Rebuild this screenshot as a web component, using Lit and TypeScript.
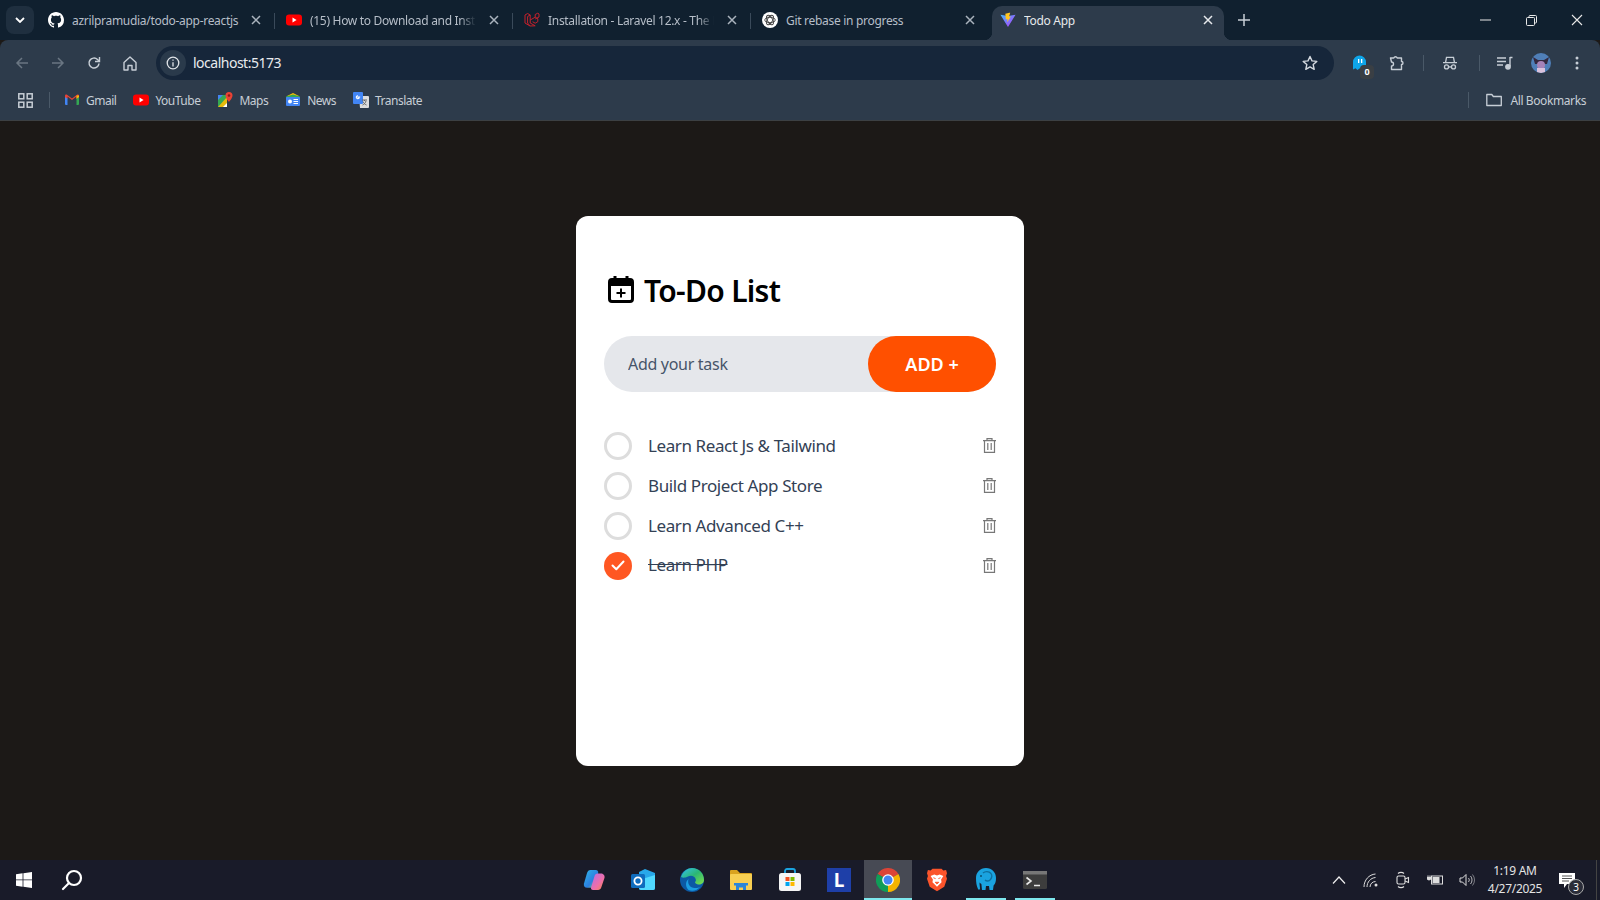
import { LitElement, html, css } from "lit";
import { customElement, state } from "lit/decorators.js";

const UI_FONT = css`"Noto Sans", "Open Sans", sans-serif`;

const githubIcon = html`<svg width="16" height="16" viewBox="0 0 16 16" fill="#fff"><path d="M8 0C3.58 0 0 3.58 0 8c0 3.54 2.29 6.53 5.47 7.59.4.07.55-.17.55-.38 0-.19-.01-.82-.01-1.49-2.01.37-2.53-.49-2.69-.94-.09-.23-.48-.94-.82-1.13-.28-.15-.68-.52-.01-.53.63-.01 1.08.58 1.23.82.72 1.21 1.87.87 2.33.66.07-.52.28-.87.51-1.07-1.78-.2-3.64-.89-3.64-3.95 0-.87.31-1.59.82-2.15-.08-.2-.36-1.02.08-2.12 0 0 .67-.21 2.2.82.64-.18 1.32-.27 2-.27.68 0 1.36.09 2 .27 1.53-1.04 2.2-.82 2.2-.82.44 1.1.16 1.92.08 2.12.51.56.82 1.27.82 2.15 0 3.07-1.87 3.75-3.65 3.95.29.25.54.73.54 1.48 0 1.07-.01 1.93-.01 2.2 0 .21.15.46.55.38A8.013 8.013 0 0016 8c0-4.42-3.58-8-8-8z"/></svg>`;
const youtubeIcon = html`<svg width="16" height="16" viewBox="0 0 16 16"><rect y="2.5" width="16" height="11" rx="3" fill="#f00"/><path d="M6.5 5.6 10.6 8l-4.1 2.4z" fill="#fff"/></svg>`;
const laravelIcon = html`<svg width="16" height="16" viewBox="0 0 16 16" fill="none" stroke="#c5202c" stroke-width="1" stroke-linejoin="round"><path d="M1 3 3.6 1.5 6.2 3v8l5 2.800M1 3v8l5 3 5.200-.2M3.600 4.500 6.200 3M3.600 4.500V11L6 14M6.200 8l5-2.800 2.600 1.500v3l-2.600 1.500-2.600-1.500M11.200 5.200V2.500l2.600-1.300 1.200.8v3l-3.800 2"/></svg>`;
const openaiIcon = html`<svg width="16" height="16" viewBox="0 0 16 16"><circle cx="8" cy="8" r="8" fill="#fff"/><g fill="none" stroke="#444" stroke-width=".9"><ellipse cx="8" cy="8" rx="5.200" ry="2.600"/><ellipse cx="8" cy="8" rx="5.200" ry="2.600" transform="rotate(60 8 8)"/><ellipse cx="8" cy="8" rx="5.200" ry="2.600" transform="rotate(120 8 8)"/></g></svg>`;
const viteIcon = html`<svg width="16" height="16" viewBox="0 0 18 18"><defs><linearGradient id="vt" x1="0" y1="0" x2="1" y2="1"><stop offset="0" stop-color="#41b9ff"/><stop offset="1" stop-color="#bd34fe"/></linearGradient></defs><path d="M.5 3 9 17 17.500 3 9 4.500z" fill="url(#vt)"/><path d="M10.500.8 6 2l.6 6.500 1.900-.5-.3 3.500 4-6.500-2 .4 1.300-4.600z" fill="#ffc61f"/></svg>`;

const gmailIcon = html`<svg width="16" height="16" viewBox="0 0 16 16"><path d="M1 13V4.500L3.500 6v7H2a1 1 0 0 1-1-1z" fill="#4285f4"/><path d="M15 13V4.500L12.500 6v7H14a1 1 0 0 0 1-1z" fill="#34a853"/><path d="M1 5V3.800C1 2.700 2.200 2.100 3 2.700L8 6.500 13 2.700c.8-.6 2-0 2 1.100V5L12.500 6.800V4.500L8 8 3.500 4.500v2.300z" fill="#ea4335"/><path d="M12.500 3.500 15 3.400V5l-2.500 1.800z" fill="#fbbc04"/></svg>`;
const mapsIcon = html`<svg width="16" height="16" viewBox="0 0 16 16"><path d="M1 3h9v12H1z" fill="#34a853"/><path d="M1 15 10 5v10z" fill="#fbbc04" opacity=".9"/><path d="M1 3h5L1 8z" fill="#4285f4"/><path d="M6 15 10 11v4z" fill="#fff"/><path d="M12 0a3.500 3.500 0 0 0-3.500 3.500C8.500 6 12 10 12 10s3.500-4 3.500-6.500A3.500 3.500 0 0 0 12 0z" fill="#ea4335"/><circle cx="12" cy="3.500" r="1.300" fill="#8c1c13"/></svg>`;
const newsIcon = html`<svg width="16" height="16" viewBox="0 0 16 16"><path d="M2 4 8 1l6 3v2H2z" fill="#fbbc04"/><path d="M1 4.500 8 2.500l7 2V6H1z" fill="#34a853"/><rect x="1" y="5" width="14" height="9" rx="1" fill="#4285f4"/><rect x="3" y="7.500" width="4" height="4" rx="2" fill="#fff"/><path d="M8.500 7.500h4.500M8.500 9.500h4.500M8.500 11.500h4.500" stroke="#fff"/></svg>`;
const translateIcon = html`<svg width="16" height="16" viewBox="0 0 16 16"><path d="M6 4h9a1 1 0 0 1 1 1v10a1 1 0 0 1-1 1H7z" fill="#ddd"/><rect width="10" height="12" rx="1" fill="#4285f4"/><path d="M7.200 5H5v1.200h1A1.500 1.500 0 1 1 5 3.800" fill="none" stroke="#fff" stroke-width="1.100"/><path d="M9 8h5M11.500 8v1M13 9c-.5 2-2 3.500-3.500 4M10 9.500c.6 1.600 2 3 3.500 3.500" fill="none" stroke="#666"/></svg>`;

@customElement("browser-chrome")
class BrowserChrome extends LitElement {
    static styles = css`
        :host {
            display: block;
            font-family: ${UI_FONT};
            color: #c7ced6;
            font-size: 12px;
        }

        svg { display: block; }

        .strip {
            display: flex;
            height: 40px;
            background: #10202f;
            padding-left: 6px;
        }

        .menu {
            width: 28px;
            height: 28px;
            margin: 6px 3px 0 0;
            border-radius: 8px;
            background: #1f2f3f;
            display: flex;
            align-items: center;
            justify-content: center;
        }

        .tab {
            position: relative;
            width: 238px;
            flex: none;
            margin-top: 6px;
            display: flex;
            align-items: center;
            padding: 0 0 6px 11px;
            box-sizing: border-box;
        }

        .tab .fav { width: 16px; flex: none; margin-right: 8px; }
        .tab .title {
            width: 171px;
            flex: none;
            white-space: nowrap;
            overflow: hidden;
            letter-spacing: -0.3px;
            color: #b6bec8;
            -webkit-mask-image: linear-gradient(to right, #000 150px, transparent 166px);
        }
        .tab .title.full { -webkit-mask-image: none; }
        .tab .close { margin-left: 8px; }

        .tab .divider {
            position: absolute;
            right: 0;
            top: 7px;
            width: 1px;
            height: 16px;
            background: #3a4a5a;
        }

        .tab.active {
            width: 232px;
            margin-left: 3px;
            background: #2d3b4b;
            border-radius: 10px 10px 0 0;
            padding: 0 0 6px 8px;
        }
        .tab.active .title { color: #e6e9ec; }
        .tab.active::before,
        .tab.active::after {
            content: "";
            position: absolute;
            bottom: 0;
            width: 8px;
            height: 8px;
        }
        .tab.active::before { left: -8px; background: radial-gradient(circle at 0 0, transparent 8px, #2d3b4b 8.500px); }
        .tab.active::after { right: -8px; background: radial-gradient(circle at 100% 0, transparent 8px, #2d3b4b 8.500px); }

        .newtab { margin: 6px 0 0 12px; width: 16px; height: 28px; display: flex; align-items: center; justify-content: center; }

        .winctl { margin-left: auto; display: flex; }
        .winctl div { width: 46px; height: 40px; display: flex; align-items: center; justify-content: center; }

        .toolbar {
            height: 34px;
            padding: 6px 0 0 4px;
            background: #2d3b4b;
            border-radius: 8px 8px 0 0;
            display: flex;
            align-items: center;
        }

        .slot { width: 36px; height: 34px; flex: none; display: flex; align-items: center; justify-content: center; }

        .omnibox {
            flex: 1;
            height: 34px;
            margin-left: 8px;
            background: #16263a;
            border-radius: 17px;
            display: flex;
            align-items: center;
            padding: 0 6px 0 4px;
        }
        .omnibox .info {
            width: 26px;
            height: 26px;
            border-radius: 50%;
            background: #2a3a4b;
            display: flex;
            align-items: center;
            justify-content: center;
            margin-right: 7px;
        }
        .omnibox .url { font-size: 14px; line-height: 33px; padding-bottom: 1px; color: #e8ebee; flex: 1; letter-spacing: -0.5px; }
        .omnibox .star { margin-right: 10px; }

        .right { width: 266px; flex: none; display: flex; align-items: center; padding-left: 8px; box-sizing: border-box; }
        .vsep { width: 1px; height: 16px; background: #4a5968; flex: none; margin: 0 8px; }

        .ghost { position: relative; }
        .badge {
            position: absolute;
            left: 18px;
            top: 19px;
            width: 14px;
            height: 14px;
            border-radius: 4px;
            background: #3a3f44;
            color: #fff;
            font-size: 9px;
            font-weight: 700;
            text-align: center;
            line-height: 14px;
        }

        .puzzle { margin-left: 1px; }
        .vsep.wide { margin: 0 7px 0 11px; }
        .music { margin-left: 0; }

        .avatar { width: 20px; height: 20px; border-radius: 50%; overflow: hidden; }

        .bookmarks {
            height: 40px;
            background: #2d3b4b;
            border-bottom: 1px solid #3c4043;
            display: flex;
            align-items: center;
            padding-left: 18px;
            gap: 17px;
        }
        .bookmarks .grid { width: 16px; }
        .bookmarks .vsep { margin: 0 -3px 0 -2px; }
        .bm { display: flex; align-items: center; gap: 6px; color: #c7ced6; letter-spacing: -0.5px; white-space: nowrap; }
        .all { margin-left: auto; display: flex; align-items: center; padding-right: 14px; letter-spacing: -0.4px; }
        .all .vsep { margin: 0 17px 0 0; }
        .all svg { margin-right: 8px; }
    `;

    _tab(icon: unknown, title: string, divider = true, full = false) {
        return html`
            <div class="tab">
                <div class="fav">${icon}</div>
                <div class="title ${full ? "full" : ""}">${title}</div>
                <div class="close">${this._x("#aab3bd")}</div>
                ${divider ? html`<div class="divider"></div>` : ""}
            </div>`;
    }

    _x(color: string) {
        return html`<svg width="10" height="10" viewBox="0 0 10 10" stroke="${color}" stroke-width="1.500"><path d="M1 1l8 8M9 1l-8 8"/></svg>`;
    }

    render() {
        return html`
            <div class="strip">
                <div class="menu">
                    <svg width="10" height="6" viewBox="0 0 10 6" fill="none" stroke="#fff" stroke-width="1.800"><path d="M1 1l4 4 4-4"/></svg>
                </div>
                ${this._tab(githubIcon, "azrilpramudia/todo-app-reactjs", true, true)}
                ${this._tab(youtubeIcon, "(15) How to Download and Inst")}
                ${this._tab(laravelIcon, "Installation - Laravel 12.x - The P")}
                ${this._tab(openaiIcon, "Git rebase in progress", false, true)}
                <div class="tab active">
                    <div class="fav">${viteIcon}</div>
                    <div class="title full">Todo App</div>
                    <div class="close">${this._x("#e6e9ec")}</div>
                </div>
                <div class="newtab">
                    <svg width="12" height="12" viewBox="0 0 12 12" stroke="#c7ced6" stroke-width="1.500"><path d="M6 0v12M0 6h12"/></svg>
                </div>
                <div class="winctl">
                    <div><svg width="11" height="2" viewBox="0 0 11 2" stroke="#e8e8e8"><path d="M0 1h11"/></svg></div>
                    <div><svg width="11" height="11" viewBox="0 0 11 11" fill="none" stroke="#e8e8e8"><rect x=".5" y="2.500" width="8" height="8" rx="1"/><path d="M3 2.500V1.500a1 1 0 0 1 1-1h5.500a1 1 0 0 1 1 1V7a1 1 0 0 1-1 1h-1"/></svg></div>
                    <div><svg width="12" height="12" viewBox="0 0 12 12" stroke="#e8e8e8" stroke-width="1.100"><path d="M1 1l10 10M11 1L1 11"/></svg></div>
                </div>
            </div>

            <div class="toolbar">
                <div class="slot"><svg width="14" height="14" viewBox="0 0 14 14" fill="none" stroke="#6a7683" stroke-width="1.500"><path d="M13 7H2M7 2 2 7l5 5"/></svg></div>
                <div class="slot"><svg width="14" height="14" viewBox="0 0 14 14" fill="none" stroke="#6a7683" stroke-width="1.500"><path d="M1 7h11M7 2l5 5-5 5"/></svg></div>
                <div class="slot"><svg width="14" height="14" viewBox="0 0 14 14" fill="none" stroke="#c7ced6" stroke-width="1.500"><path d="M12 7.500A5 5 0 1 1 10.500 3.500L12 5"/><path d="M12.500 1v4.500H8" stroke-width="1.400"/></svg></div>
                <div class="slot"><svg width="14" height="15" viewBox="0 0 14 15" fill="none" stroke="#c7ced6" stroke-width="1.400"><path d="M1 6.500 7 1l6 5.500V14H9V9.500H5V14H1z" stroke-linejoin="round"/></svg></div>
                <div class="omnibox">
                    <div class="info"><svg width="14" height="14" viewBox="0 0 14 14" fill="none" stroke="#e0e4e8" stroke-width="1.300"><circle cx="7" cy="7" r="5.800"/><path d="M7 6.200V10.500M7 3.400v1.300"/></svg></div>
                    <div class="url">localhost:5173</div>
                    <svg class="star" width="16" height="16" viewBox="0 0 16 16" fill="none" stroke="#d5dae0" stroke-width="1.400" stroke-linejoin="round"><path d="M8 1.500l2 4.400 4.800.5-3.600 3.200 1 4.700L8 11.900l-4.200 2.400 1-4.700L1.200 6.400 6 5.900z"/></svg>
                </div>
                <div class="right">
                    <div class="slot ghost">
                        <svg width="14" height="16" viewBox="0 0 14 16"><path d="M0 7a6.500 6.500 0 0 1 13 0v7.500l-2.200-1.300L9 15l-2.200-1.800L4.500 15 2.500 13.200 0 14.500z" fill="#0ea5e9"/><rect x="5" y="4" width="1.300" height="4" fill="#fff"/><rect x="8" y="4" width="1.300" height="4" fill="#fff"/></svg>
                        <div class="badge">0</div>
                    </div>
                    <div class="slot puzzle">
                        <svg width="16" height="16" viewBox="0 0 16 16" fill="none" stroke="#c7ced6" stroke-width="1.400" stroke-linejoin="round"><path d="M1.500 3h3.300a1.800 1.800 0 0 1 3.400 0h4.300v3.500a1.500 1.500 0 0 1 0 3V14.500H2.500V11a2 2 0 0 0 0-4z"/></svg>
                    </div>
                    <div class="vsep"></div>
                    <div class="slot">
                        <svg width="16" height="14" viewBox="0 0 18 16" fill="none" stroke="#c7ced6" stroke-width="1.500"><path d="M1 7.500h16M4 7l1-5.500h8L14 7"/><circle cx="5" cy="12.500" r="2.300"/><circle cx="13" cy="12.500" r="2.300"/><path d="M7.300 12.500h3.400"/></svg>
                    </div>
                    <div class="vsep wide"></div>
                    <div class="slot music">
                        <svg width="16" height="14" viewBox="0 0 16 14" fill="none" stroke="#c7ced6" stroke-width="1.400"><path d="M0 2h9M0 5.500h9M0 9h6"/><path d="M13 1.500h2.500M13 1v9"/><circle cx="11" cy="10.800" r="2.200" fill="#c7ced6"/></svg>
                    </div>
                    <div class="slot">
                        <div class="avatar">
                            <svg width="20" height="20" viewBox="0 0 20 20"><rect width="20" height="20" fill="#4f7fb8"/><path d="M2 4l5 3h6l5-3-2 7H4z" fill="#34293f"/><circle cx="10" cy="12" r="4" fill="#a583b8"/><rect x="6" y="15" width="8" height="5" fill="#d9c2dc"/></svg>
                        </div>
                    </div>
                    <div class="slot">
                        <svg width="4" height="14" viewBox="0 0 4 14" fill="#c7ced6"><circle cx="2" cy="2" r="1.500"/><circle cx="2" cy="7" r="1.500"/><circle cx="2" cy="12" r="1.500"/></svg>
                    </div>
                </div>
            </div>

            <div class="bookmarks">
                <div class="grid">
                    <svg width="15" height="15" viewBox="0 0 15 15" fill="none" stroke="#c7ced6" stroke-width="1.500"><rect x=".8" y=".8" width="5" height="5"/><rect x="9.200" y=".8" width="5" height="5"/><rect x=".8" y="9.200" width="5" height="5"/><rect x="9.200" y="9.200" width="5" height="5"/></svg>
                </div>
                <div class="vsep"></div>
                <div class="bm">${gmailIcon}Gmail</div>
                <div class="bm">${youtubeIcon}YouTube</div>
                <div class="bm">${mapsIcon}Maps</div>
                <div class="bm">${newsIcon}News</div>
                <div class="bm">${translateIcon}Translate</div>
                <div class="all">
                    <div class="vsep"></div>
                    <svg width="16" height="14" viewBox="0 0 16 14" fill="none" stroke="#c7ced6" stroke-width="1.300"><path d="M.8 12.500V1.500h5l1.500 2h8v9z" stroke-linejoin="round"/></svg>
                    All Bookmarks
                </div>
            </div>
        `;
    }
}

type Todo = { id: number; text: string; done: boolean };

@customElement("todo-card")
class TodoCard extends LitElement {
    static styles = css`
        :host {
            display: block;
            width: 448px;
            min-height: 550px;
            box-sizing: border-box;
            padding: 28px;
            background: #fff;
            border-radius: 12px;
            font-family: ${UI_FONT};
        }

        .head {
            display: flex;
            align-items: center;
            gap: 10px;
            margin-top: 28px;
            height: 36px;
        }

        .head svg { margin-left: 4px; margin-bottom: 2px; display: block; }

        h1 {
            margin: 2px 0 0;
            font-size: 30px;
            line-height: 36px;
            font-weight: 600;
            color: #000;
            letter-spacing: -0.7px;
        }

        form {
            display: flex;
            height: 56px;
            margin: 28px 0 40px;
            background: #e5e7eb;
            border-radius: 28px;
        }

        input {
            flex: 1;
            min-width: 0;
            border: 0;
            outline: 0;
            background: transparent;
            padding: 0 24px;
            font: 16px ${UI_FONT};
            letter-spacing: -0.3px;
            color: #1e293b;
        }
        input::placeholder { color: #475569; opacity: 1; }

        button.add {
            width: 128px;
            border: 0;
            border-radius: 28px;
            background: #ff5000;
            color: #fff;
            font: 600 18px ${UI_FONT};
            cursor: pointer;
        }

        ul { list-style: none; margin: 0; padding: 0; display: flex; flex-direction: column; gap: 12px; }

        li { display: flex; align-items: center; height: 28px; }

        .check {
            width: 28px;
            height: 28px;
            flex: none;
            box-sizing: border-box;
            border: 3px solid #ddd;
            border-radius: 50%;
            display: flex;
            align-items: center;
            justify-content: center;
            cursor: pointer;
        }
        .check.done { border: 0; background: #ff5722; }

        .text {
            flex: 1;
            margin-left: 16px;
            font-size: 17px;
            letter-spacing: -0.4px;
            color: #334155;
            cursor: pointer;
        }
        .text.done { text-decoration: line-through; padding-bottom: 3px; }

        .trash { display: block; cursor: pointer; }
    `;

    @state() todos: Todo[] = [
        { id: 1, text: "Learn React Js & Tailwind", done: false },
        { id: 2, text: "Build Project App Store", done: false },
        { id: 3, text: "Learn Advanced C++", done: false },
        { id: 4, text: "Learn PHP", done: true },
    ];

    _toggle(id: number) {
        this.todos = this.todos.map(t => t.id === id ? { ...t, done: !t.done } : t);
    }

    _remove(id: number) {
        this.todos = this.todos.filter(t => t.id !== id);
    }

    _add(e: Event) {
        e.preventDefault();
        const input = this.renderRoot.querySelector("input") as HTMLInputElement;
        const text = input.value.trim();
        if (!text) return;
        this.todos = [...this.todos, { id: Date.now(), text, done: false }];
        input.value = "";
    }

    render() {
        return html`
            <div class="head">
                <svg width="26" height="28" viewBox="0 0 26 28" fill="none" stroke="#000">
                    <rect x="1.500" y="4.500" width="23" height="22" rx="2.500" stroke-width="3"/>
                    <path d="M1.500 8h23" stroke-width="6"/>
                    <path d="M7 1v5M19 1v5" stroke-width="3"/>
                    <path d="M13 13.500v9M8.500 18h9" stroke-width="2"/>
                </svg>
                <h1>To-Do List</h1>
            </div>

            <form @submit=${this._add}>
                <input type="text" placeholder="Add your task" />
                <button class="add" type="submit">ADD +</button>
            </form>

            <ul>
                ${this.todos.map(t => html`
                    <li>
                        <div class="check ${t.done ? "done" : ""}" @click=${() => this._toggle(t.id)}>
                            ${t.done ? html`<svg width="14" height="11" viewBox="0 0 14 11" fill="none" stroke="#fff" stroke-width="2" stroke-linecap="round" stroke-linejoin="round"><path d="M1.500 5.500l3.800 3.800L12.500 1.500"/></svg>` : ""}
                        </div>
                        <div class="text ${t.done ? "done" : ""}" @click=${() => this._toggle(t.id)}>${t.text}</div>
                        <svg class="trash" @click=${() => this._remove(t.id)} width="13" height="15" viewBox="0 0 13 15" fill="none" stroke="#777" stroke-width="1.200">
                            <path d="M0 2.600h13M4 2.600V.7h5v1.900M1.500 2.600v11.800h10V2.600M4.800 5v7M8.200 5v7"/>
                        </svg>
                    </li>
                `)}
            </ul>
        `;
    }
}

@customElement("os-taskbar")
class OsTaskbar extends LitElement {
    static styles = css`
        :host {
            display: flex;
            height: 40px;
            flex: none;
            background: #191b29;
            font-family: ${UI_FONT};
            color: #e4e4e4;
            font-size: 12px;
        }

        svg { display: block; }

        .left { width: 570px; flex: none; display: flex; }
        .left div { width: 48px; height: 40px; display: flex; align-items: center; justify-content: center; }

        .apps { display: flex; }
        .app {
            position: relative;
            width: 48px;
            margin-right: 1px;
            height: 40px;
            display: flex;
            align-items: center;
            justify-content: center;
            box-sizing: border-box;
        }
        .app.current { background: #474a54; }
        .app.open::after {
            content: "";
            position: absolute;
            left: 4px;
            right: 4px;
            bottom: 0;
            height: 2px;
            background: #7ee8ee;
        }
        .app.current::after {
            content: "";
            position: absolute;
            left: 0;
            right: 0;
            bottom: 0;
            height: 2px;
            background: #7ee8ee;
        }

        .ltile {
            width: 24px;
            height: 24px;
            background: #1e3fa8;
            color: #fff;
            font: 700 19px/24px "Noto Sans", sans-serif;
            text-align: center;
        }

        .tray { margin-left: auto; display: flex; align-items: center; }
        .tray .ic { width: 32px; height: 40px; display: flex; align-items: center; justify-content: center; }

        .clock { width: 64px; text-align: center; line-height: 18px; letter-spacing: -0.3px; white-space: nowrap; }

        .notif { position: relative; width: 43px; height: 40px; box-sizing: border-box; padding-right: 4px; display: flex; align-items: center; justify-content: center; }
        .notif .num {
            position: absolute;
            left: 21px;
            top: 19px;
            width: 14px;
            height: 14px;
            border: 1px solid #aaa;
            border-radius: 50%;
            background: #2a2c38;
            color: #fff;
            font-size: 10px;
            line-height: 14px;
            text-align: center;
        }

        .edge { width: 1px; height: 40px; margin: 0 3px 0 6px; background: #444; }
    `;

    render() {
        return html`
            <div class="left">
                <div>
                    <svg width="16" height="16" viewBox="0 0 16 16" fill="#fff"><path d="M0 2.300 6.600 1.300v6.200H0zM7.400 1.200 16 0v7.500H7.400zM0 8.300h6.600v6.400L0 13.700zM7.400 8.300H16V16l-8.600-1.200z"/></svg>
                </div>
                <div>
                    <svg width="22" height="22" viewBox="0 0 22 22" fill="none" stroke="#fff" stroke-width="2.200"><circle cx="13" cy="9" r="7"/><path d="M8 14l-6 6" stroke-linecap="round"/></svg>
                </div>
            </div>

            <div class="apps">
                <div class="app">
                    <svg width="22" height="24" viewBox="0 0 24 24"><defs><linearGradient id="c1" x1="0" y1="0" x2="1" y2="1"><stop offset="0" stop-color="#2fb6e8"/><stop offset=".6" stop-color="#2b7fe0"/><stop offset="1" stop-color="#b6d93c"/></linearGradient><linearGradient id="c2" x1="0" y1="0" x2="1" y2="1"><stop offset="0" stop-color="#b56be8"/><stop offset=".6" stop-color="#f06fa8"/><stop offset="1" stop-color="#f7883c"/></linearGradient></defs><path d="M8 1h6c2 0 3 1.500 2.500 3.500L13 18c-.5 1.500-1.600 2.500-3 2.500H4.500C2 20.500.5 18.500 1 16L4.500 4C5 2.300 6.300 1 8 1z" fill="url(#c1)"/><path d="M16 5h3.500c2.500 0 4.500 2 4 4.500L20 20c-.6 2-2 3-3.600 3H11c-1.800 0-2.600-1.300-2.200-2.800L12.500 8C13 6 14.300 5 16 5z" fill="url(#c2)"/></svg>
                </div>
                <div class="app">
                    <svg width="24" height="24" viewBox="0 0 24 24"><path d="M8 4l6-3 10 4v15a2 2 0 0 1-2 2H10a2 2 0 0 1-2-2z" fill="#28a8ea"/><path d="M8 12l16-5v13a2 2 0 0 1-2 2H10a2 2 0 0 1-2-2z" fill="#50d9ff"/><rect y="6" width="14" height="14" rx="1.500" fill="#0f6cbd"/><circle cx="7" cy="13" r="3.600" fill="none" stroke="#fff" stroke-width="1.800"/></svg>
                </div>
                <div class="app">
                    <svg width="24" height="24" viewBox="0 0 24 24"><defs><linearGradient id="e1" x1="0" y1="0" x2="1" y2="1"><stop offset="0" stop-color="#35c1f1"/><stop offset=".5" stop-color="#2bb673"/><stop offset="1" stop-color="#7fe04a"/></linearGradient></defs><circle cx="12" cy="12" r="12" fill="#0c59a4"/><path d="M1 9C3 3 8 0 12 0c7 0 12 5 12 12 0 3-3 5-6 4.500-2-.3-3-1.500-3-2.500.8-.6 1-1.500.8-2.500C15 8 11 7 8 8.500 5 10 3 10 1 9z" fill="url(#e1)"/><path d="M8.500 22c-3-3-3.500-8 0-11-1.500 5 2 9.500 7 9 2 0 3.500-.5 5-1.500-3 4-8 5-12 3.500z" fill="#1b9de2"/></svg>
                </div>
                <div class="app">
                    <svg width="24" height="22" viewBox="0 0 24 22"><path d="M1 2a1 1 0 0 1 1-1h6l3 3h11a1 1 0 0 1 1 1v3H1z" fill="#d9a31f"/><rect x="1" y="5" width="22" height="16" rx="1" fill="#f7cf52"/><path d="M7 21v-5h10v5h-3v-2.500h-4V21z" fill="#2a86d8"/><rect x="5" y="14" width="14" height="2.500" fill="#2a86d8"/></svg>
                </div>
                <div class="app">
                    <svg width="24" height="24" viewBox="0 0 24 24"><path d="M7 6V3a2 2 0 0 1 2-2h6a2 2 0 0 1 2 2v3" fill="none" stroke="#1aa3e0" stroke-width="1.800"/><rect x="1" y="5" width="22" height="18" rx="2.500" fill="#f5f5f5"/><rect x="7.500" y="9" width="4" height="4" fill="#f25022"/><rect x="12.500" y="9" width="4" height="4" fill="#7fba00"/><rect x="7.500" y="14" width="4" height="4" fill="#00a4ef"/><rect x="12.500" y="14" width="4" height="4" fill="#ffb900"/></svg>
                </div>
                <div class="app"><div class="ltile">L</div></div>
                <div class="app current">
                    <svg width="24" height="24" viewBox="0 0 24 24"><path d="M12 12 1.600 6A12 12 0 0 1 22.400 6z" fill="#db4437"/><path d="M12 12 22.400 6A12 12 0 0 1 12 24z" fill="#f4b400"/><path d="M12 12 12 24A12 12 0 0 1 1.600 6z" fill="#0f9d58"/><circle cx="12" cy="12" r="5.800" fill="#fff"/><circle cx="12" cy="12" r="4.500" fill="#4285f4"/></svg>
                </div>
                <div class="app">
                    <svg width="20" height="24" viewBox="0 0 22 25"><path d="M6 0h10l2 2 3-.5L22 5l-1 3 1 3-3 9-8 5-8-5-3-9 1-3-1-3 1-3.500L4 2z" fill="#fb542b"/><path d="M4 8l4-1.500 3 1 3-1L18 8l-2.500 4 .5 3-5 5-5-5 .5-3z" fill="#fff"/><path d="M7 10l2.500 1M15 10l-2.500 1M9 15h4l-2 2z" stroke="#fb542b" fill="#fb542b"/></svg>
                </div>
                <div class="app open">
                    <svg width="24" height="26" viewBox="0 0 24 26"><path d="M12 1C6 1 2 5.500 2 11c0 4 .5 8 2 11 .4 1 2 1 2-.5 0-2-.6-4-.4-6 .3.500 1 1 1.800 1.500L8 23h3.500l.5-4h3l.5 4H19l.6-4.500C21.500 17 22 14 22 11 22 5.500 18 1 12 1z" fill="#1aa3e0"/><path d="M9 6c2-2 6-2 8 .5 1 1.500 1 4-.5 6-1.500 1.800-4 2-5.500.5" fill="none" stroke="#0f6f9e" stroke-width="1.300"/><circle cx="7" cy="9" r="1" fill="#0b4f72"/></svg>
                </div>
                <div class="app open">
                    <svg width="24" height="18" viewBox="0 0 24 18"><rect width="24" height="18" rx="1.500" fill="#3d3d3d"/><rect width="24" height="3.500" fill="#777"/><path d="M3.500 6.500 8 10l-4.500 3.500" fill="none" stroke="#e8e8e8" stroke-width="1.600"/><path d="M11 14.500h6" stroke="#e8e8e8" stroke-width="1.500"/></svg>
                </div>
            </div>

            <div class="tray">
                <div class="ic"><svg width="14" height="8" viewBox="0 0 14 8" fill="none" stroke="#eee" stroke-width="1.200"><path d="M1 7.500 7 1l6 6.500"/></svg></div>
                <div class="ic"><svg width="16" height="14" viewBox="0 0 16 14" fill="none" stroke="#ddd"><path d="M1 14C1 7 6 1.500 12.500 1M4 14c0-5 3.500-9 8.500-9.500M7 14c0-3 2.500-5.500 5.500-5.500"/><circle cx="13" cy="12" r="1.500" fill="#ddd" stroke="none"/></svg></div>
                <div class="ic"><svg width="14" height="18" viewBox="0 0 14 18" fill="none" stroke="#ddd" stroke-width="1.100"><rect x="1" y="5" width="8" height="8" rx="1.500"/><path d="M9 8l3.500-1.500v5L9 10M2 2.500C3.500 1 6.500 1 8 2.500M2 15.500C3.500 17 6.500 17 8 15.500"/></svg></div>
                <div class="ic"><svg width="16" height="12" viewBox="0 0 16 12"><rect x="4.500" y="2" width="11" height="8" fill="none" stroke="#ddd"/><rect x="5.500" y="3" width="7" height="6" fill="#ddd"/><path d="M1 1v2M3 1v2M0 3h4v2l-1 1H1L0 5z" fill="#ddd" stroke="#ddd" stroke-width=".6"/></svg></div>
                <div class="ic"><svg width="16" height="14" viewBox="0 0 16 14" fill="none" stroke="#ddd"><path d="M1 5h2.500L7 1.500v11L3.500 9H1z"/><path d="M9.500 5a3 3 0 0 1 0 4M11.500 3a6 6 0 0 1 0 8" opacity=".8"/><path d="M13.500 1.500a8.500 8.500 0 0 1 0 11" opacity=".5"/></svg></div>
                <div class="clock">1:19 AM<br />4/27/2025</div>
                <div class="notif">
                    <svg width="16" height="15" viewBox="0 0 16 15"><path d="M0 0h16v11H8l-3 4v-4H0z" fill="#fff"/><path d="M3 3h10M3 5.500h10M3 8h7" stroke="#555"/></svg>
                    <div class="num">3</div>
                </div>
                <div class="edge"></div>
            </div>
        `;
    }
}

@customElement("app-root")
export class AppRoot extends LitElement {
    static styles = css`
        :host {
            display: flex;
            flex-direction: column;
            height: 100vh;
            background: #1c1917;
        }

        main {
            flex: 1;
            display: flex;
            align-items: center;
            justify-content: center;
        }
    `;

    render() {
        return html`
            <browser-chrome></browser-chrome>
            <main><todo-card></todo-card></main>
            <os-taskbar></os-taskbar>
        `;
    }
}
